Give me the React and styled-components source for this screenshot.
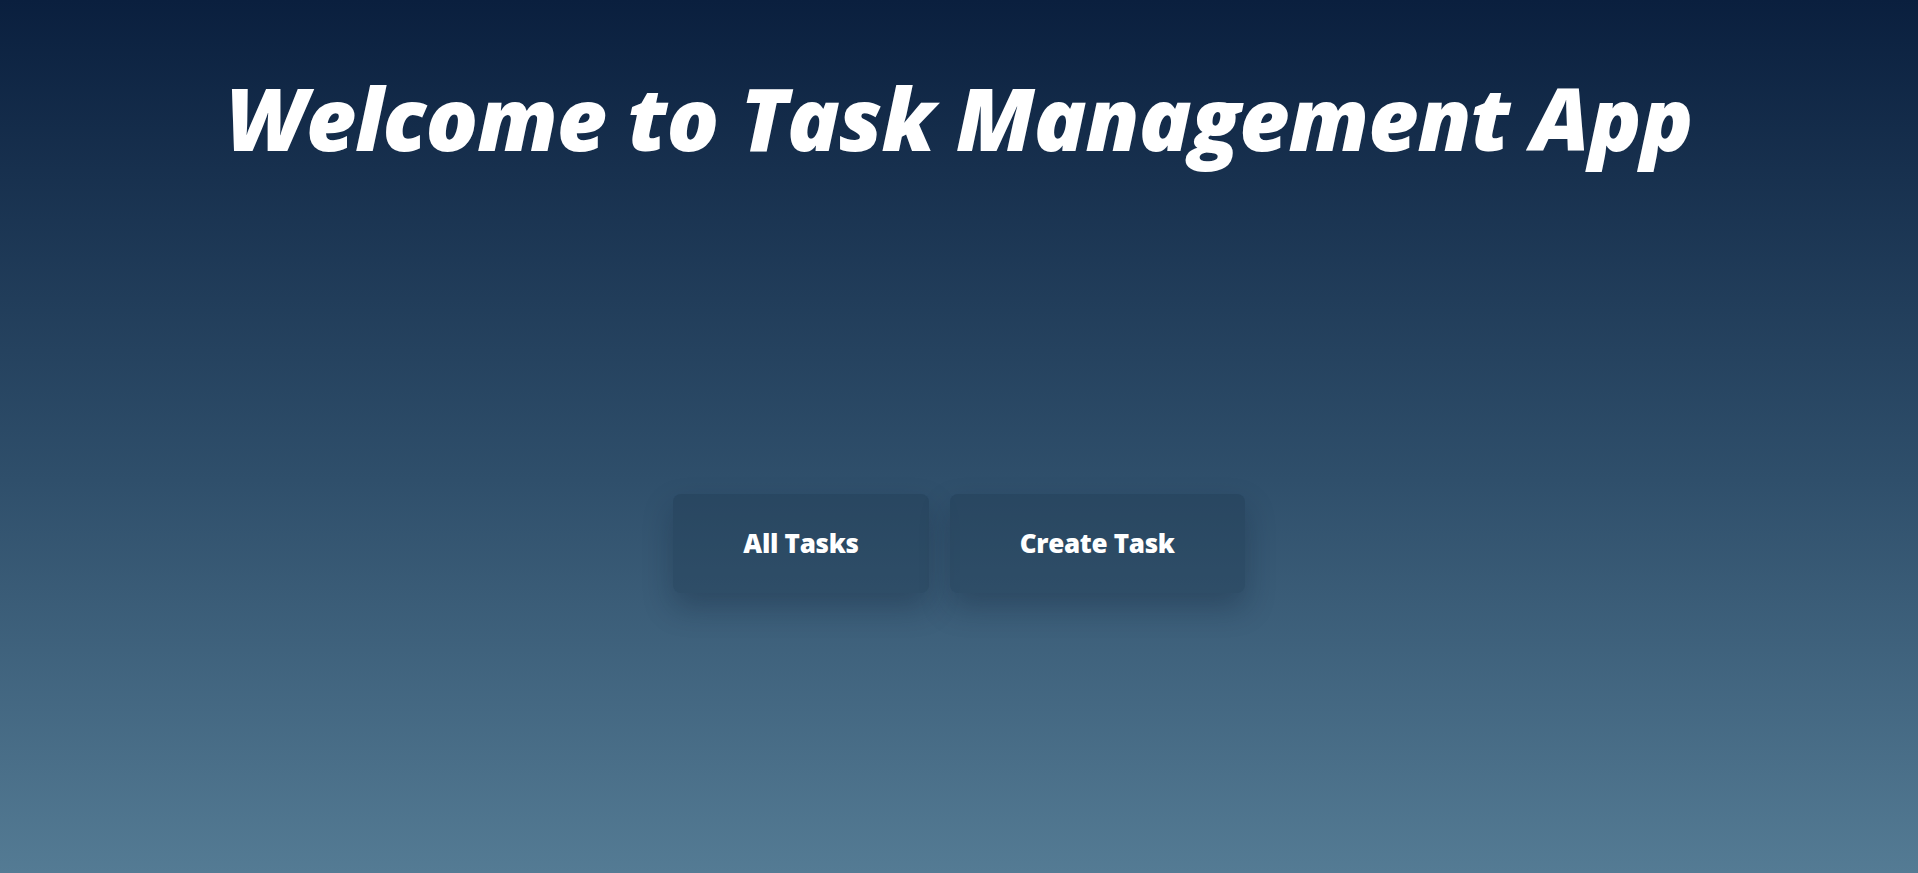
import React from 'react'
import styled, { createGlobalStyle } from 'styled-components'

const GlobalStyle = createGlobalStyle`
  html, body {
    margin: 0;
    padding: 0;
  }
  body {
    font-family: 'Open Sans', 'Liberation Sans', sans-serif;
  }
`

const Page = styled.div`
  min-height: 100vh;
  display: flex;
  flex-direction: column;
  background: linear-gradient(to bottom, #0a1f3e 0%, #2f4f6b 55%, #547b94 100%);
  color: #fff;
`

const Header = styled.header`
  padding: 65px 20px 0;
  height: 148px;
  display: flex;
  justify-content: center;
`

const Title = styled.h1`
  margin: 0;
  font-family: 'Open Sans', sans-serif;
  font-weight: 800;
  font-style: italic;
  font-size: 87px;
  line-height: 1.2;
  letter-spacing: -1px;
  color: #fff;
`

const Main = styled.main`
  flex: 1;
  display: flex;
  align-items: center;
  justify-content: center;
  gap: 21px;
`

const NavButton = styled.button`
  height: 99px;
  padding: 0 70px;
  border: none;
  border-radius: 8px;
  background: rgba(30, 55, 80, 0.38);
  box-shadow: 0 14px 30px rgba(10, 25, 45, 0.28);
  color: #fff;
  font-family: 'Open Sans', sans-serif;
  font-weight: 800;
  font-size: 26px;
  letter-spacing: -0.3px;
  cursor: pointer;
`

export default function App() {
  return (
    <Page>
      <GlobalStyle />
      <Header>
        <Title>Welcome to Task Management App</Title>
      </Header>
      <Main>
        <NavButton>All Tasks</NavButton>
        <NavButton>Create Task</NavButton>
      </Main>
    </Page>
  )
}
